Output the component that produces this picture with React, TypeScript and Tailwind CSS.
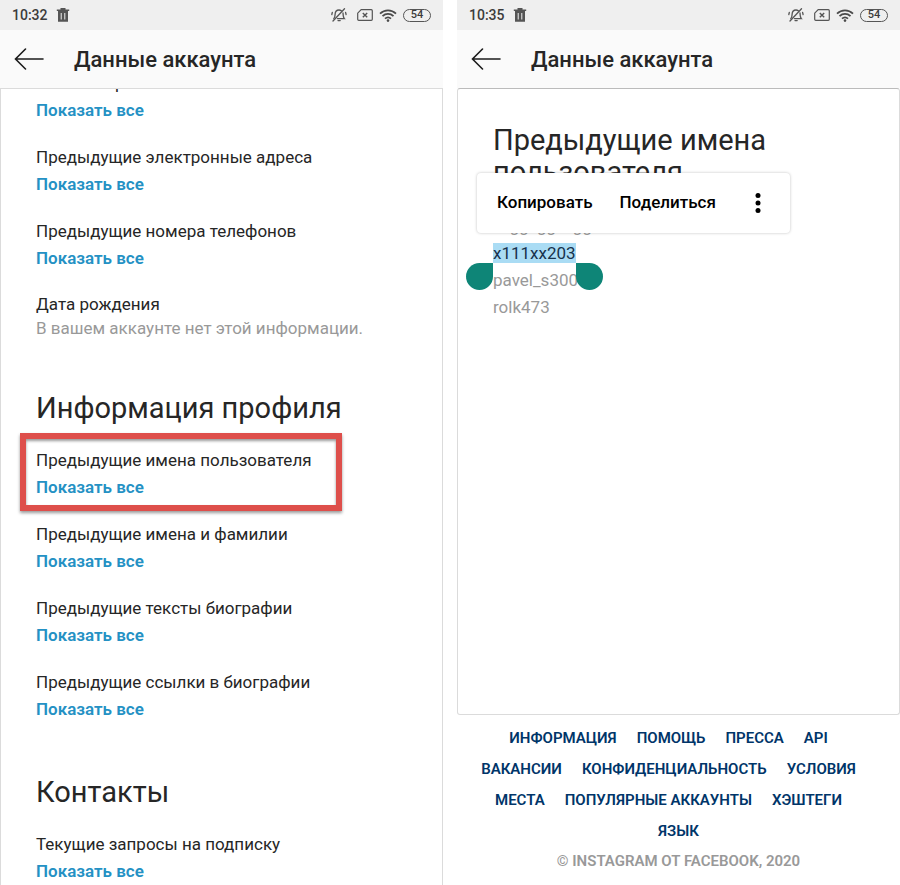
import type { ReactNode } from "react";
import clsx from "clsx";

const account = [
    { title: 'Смены пароля' },
    { title: 'Предыдущие электронные адреса' },
    { title: 'Предыдущие номера телефонов' },
    { title: 'Дата рождения', empty: 'В вашем аккаунте нет этой информации.' },
]

const profile = [
    { title: 'Предыдущие имена пользователя', marked: true },
    { title: 'Предыдущие имена и фамилии' },
    { title: 'Предыдущие тексты биографии' },
    { title: 'Предыдущие ссылки в биографии' },
]

const contacts = [{ title: 'Текущие запросы на подписку' }]

const footerLinks = [
    'Информация', 'Помощь', 'Пресса', 'API', 'Вакансии', 'Конфиденциальность',
    'Условия', 'Места', 'Популярные аккаунты', 'Хэштеги', 'Язык',
]

type Item = { title: string; empty?: string; marked?: boolean }

function TrashIcon() {
    return (
        <svg viewBox="0 0 14 16" className="h-4 w-[14px]" fill="#555">
            <path d="M.8 2.400h3.700V1h5v1.400h3.700v1.700H.8z" />
            <path fillRule="evenodd" d="M2 4.100h10V14.800H2zM4.700 6v6.500h1V6zm3.600 0v6.500h1V6z" />
        </svg>
    )
}

function MutedBellIcon() {
    return (
        <svg viewBox="0 0 16 14" className="h-[14px] w-4" fill="none" stroke="#555" strokeWidth="1.3" strokeLinecap="round">
            <path d="M2.800 10.600c1-.8 1.200-2 1.300-4.200C4.200 3.600 5.600 2 8 2c1 0 1.700.3 2.400.8M12 5c.1 3.200.3 4.600 1.300 5.600H6.500" />
            <path d="M13.500.7 2 13M7 12.600h2.200M1.300 4.500.8 6.500M14.600 4.500l.5 2" />
        </svg>
    )
}

function NoSimIcon() {
    return (
        <svg viewBox="0 0 16 12" className="h-3 w-4" fill="none" stroke="#555" strokeWidth="1.2">
            <path d="M4.200.7h10.100a1 1 0 0 1 1 1v8.600a1 1 0 0 1-1 1H1.700a1 1 0 0 1-1-1V4.200z" />
            <path d="m5.800 3.900 4.400 4.400m0-4.400L5.800 8.300" strokeWidth="1.400" />
        </svg>
    )
}

function WifiIcon() {
    return (
        <svg viewBox="0 0 18 13" className="h-[13px] w-[18px]" fill="none" stroke="#4a4a4a" strokeWidth="1.800">
            <path d="M1 4.600c4.600-4.400 11.400-4.400 16 0M3.500 7.200c3.200-3 7.800-3 11 0M6 9.700c1.800-1.600 4.200-1.600 6 0" />
            <circle cx="9" cy="11.600" r="1.300" fill="#4a4a4a" stroke="none" />
        </svg>
    )
}

function StatusBar({ time }: { time: string }) {
    return (
        <div className="flex h-[30px] shrink-0 items-center justify-between bg-[#efefef] px-3 text-[#3c3c3c]">
            <div className="flex items-center gap-2">
                <span className="text-sm font-medium">{time}</span>
                <TrashIcon />
            </div>
            <div className="flex items-center gap-[6px]">
                <MutedBellIcon />
                <span className="ml-1"><NoSimIcon /></span>
                <WifiIcon />
                <span className="flex h-[13px] w-7 items-center justify-center rounded-full border border-[#555] text-[11px] font-medium">54</span>
            </div>
        </div>
    )
}

function Phone({ time, children }: { time: string; children: ReactNode }) {
    return (
        <section className="flex min-h-0 min-w-0 flex-col">
            <StatusBar time={time} />
            <header className="flex h-[58px] shrink-0 items-center gap-[30px] bg-[#fafafa] pl-[14px]">
                <button aria-label="Назад">
                    <svg viewBox="0 0 30 22" className="h-[22px] w-[30px]" fill="none" stroke="#1c1c1c" strokeWidth="1.600" strokeLinecap="round">
                        <path d="M29 11H1.500M11.500 1 1.500 11l10 10" />
                    </svg>
                </button>
                <h1 className="text-[22px] font-medium">Данные аккаунта</h1>
            </header>
            {children}
        </section>
    )
}

function Group({ title, items }: { title?: string; items: Item[] }) {
    return (
        <div>
            {title && <h2 className="mb-[21px] text-[29px] leading-9">{title}</h2>}
            <ul className="flex flex-col gap-5">
                {items.map((item) => (
                    <li key={item.title} className="relative">
                        <p className={clsx(item.empty ? 'leading-[25px]' : 'leading-[27px]')}>{item.title}</p>
                        {item.empty
                            ? <p className="leading-[22px] text-[#999]">{item.empty}</p>
                            : <a href="#" className="block w-fit font-semibold leading-[27px] text-[#2491c4]">Показать все</a>}
                        {item.marked && (
                            <div className="pointer-events-none absolute -left-4 -top-[14px] h-[78px] w-[322px] border-[6px] border-[#de4f4b] shadow-[0_2px_3px_rgba(0,0,0,0.4),inset_0_2px_3px_rgba(0,0,0,0.4)]" />
                        )}
                    </li>
                ))}
            </ul>
        </div>
    )
}

export default function App() {
    return (
        <main className="grid h-screen grid-cols-2 gap-[14px] overflow-hidden bg-white font-['Roboto',sans-serif] text-[17px] text-[#262626]">
            <Phone time="10:32">
                <div className="min-h-0 flex-1 overflow-hidden border border-b-0 border-[#dbdbdb] pl-[35px]">
                    {/* list is scrolled, the first title slides under the header */}
                    <div className="-mt-[19px] flex flex-col gap-[51px]">
                        <Group items={account} />
                        <Group title="Информация профиля" items={profile} />
                        <Group title="Контакты" items={contacts} />
                    </div>
                </div>
            </Phone>
            <Phone time="10:35">
                <div className="relative flex-1 rounded-[3px] border border-[#dbdbdb] border-t-[#bbb] px-[35px] pt-[35px]">
                    <h2 className="text-[29px] leading-8">Предыдущие имена пользователя</h2>
                    <ul className="mt-[25px] leading-[27px] text-[#999]">
                        <li>xxggxggxxgg</li>
                        <li>
                            <span className="relative bg-[#aadcf4] text-[#17324d]">
                                x111xx203
                                <i className="absolute -left-[27px] top-full size-[27px] rounded-full rounded-tr-none bg-[#0e8577]" />
                                <i className="absolute -right-[27px] top-full size-[27px] rounded-full rounded-tl-none bg-[#0e8577]" />
                            </span>
                        </li>
                        <li>pavel_s300</li>
                        <li>rolk473</li>
                    </ul>
                    <div className="absolute left-[19px] top-[84px] flex h-[60px] w-[313px] items-center gap-[27px] rounded-sm bg-white pl-5 font-medium text-black shadow-[0_0_3px_rgba(0,0,0,0.25)]">
                        <button>Копировать</button>
                        <button>Поделиться</button>
                        <button aria-label="Ещё" className="ml-3">
                            <svg viewBox="0 0 6 20" className="h-5 w-[6px]">
                                <circle cx="3" cy="2.500" r="2.500" />
                                <circle cx="3" cy="10" r="2.500" />
                                <circle cx="3" cy="17.500" r="2.500" />
                            </svg>
                        </button>
                    </div>
                </div>
                <footer className="px-5 pb-[10px] pt-2 text-center text-[15px] font-semibold uppercase">
                    <nav className="flex flex-wrap justify-center text-[#003569]">
                        {footerLinks.map((link) => (
                            <a key={link} href="#" className="mr-5 leading-[31px] last:mr-0">{link}</a>
                        ))}
                    </nav>
                    <p className="leading-[28px] text-[#999]">© Instagram от Facebook, 2020</p>
                </footer>
            </Phone>
        </main>
    )
}
